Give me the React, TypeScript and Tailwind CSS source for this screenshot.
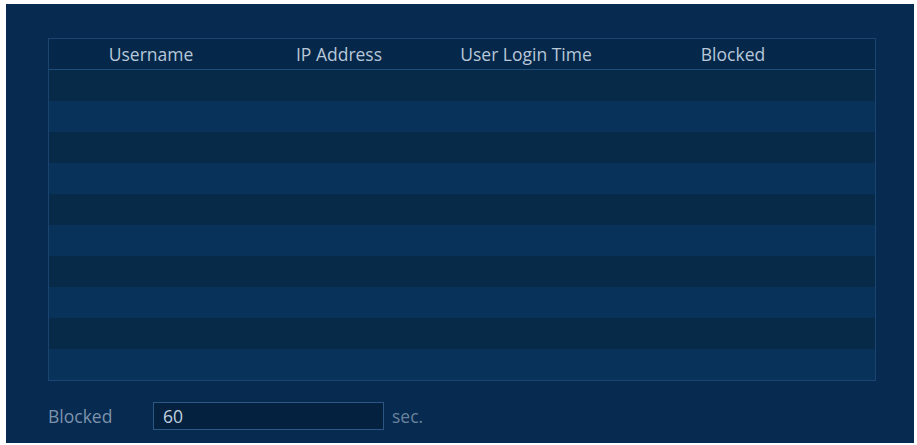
import React from "react";

const COLUMNS = [
  { label: "Username", w: "w-[204px]" },
  { label: "IP Address", w: "w-[172px]" },
  { label: "User Login Time", w: "w-[202px]" },
  { label: "Blocked", w: "w-[212px]" },
];

const ROWS = Array.from({ length: 10 }, (_, i) => i);

export default function App() {
  return (
    <div className="w-[917px] h-[445px] bg-white pl-[6px] pt-[4px] pr-[3px] pb-[2px] font-['Open_Sans',sans-serif]">
      <div className="h-full bg-[#062a50] pt-[34px] pl-[42px] pr-[38px] flex flex-col">
        {/* table */}
        <div className="border border-[#1b4570] bg-[#05284c]">
          <div className="flex h-[31px] items-center bg-[#05274a] border-b border-[#1f4e7c] text-[17.5px] text-[#b8c8d9]">
            {COLUMNS.map((c) => (
              <div key={c.label} className={`${c.w} text-center`}>
                {c.label}
              </div>
            ))}
          </div>
          <div className="flex flex-col">
            {ROWS.map((i) => (
              <div
                key={i}
                className={
                  i % 2 === 0
                    ? "h-[31px] bg-[#072a48]"
                    : "h-[31px] bg-[#08325a]"
                }
              />
            ))}
          </div>
        </div>

        {/* bottom field */}
        <div className="flex items-center mt-[21px] text-[17.5px]">
          <span className="w-[105px] text-[#7d93ab]">Blocked</span>
          <div className="w-[231px] h-[28px] border border-[#2c5684] bg-[#04223f] flex items-center pl-[9px] text-[#c0cfdf]">
            60
          </div>
          <span className="ml-[8px] text-[#6a829c]">sec.</span>
        </div>
      </div>
    </div>
  );
}
